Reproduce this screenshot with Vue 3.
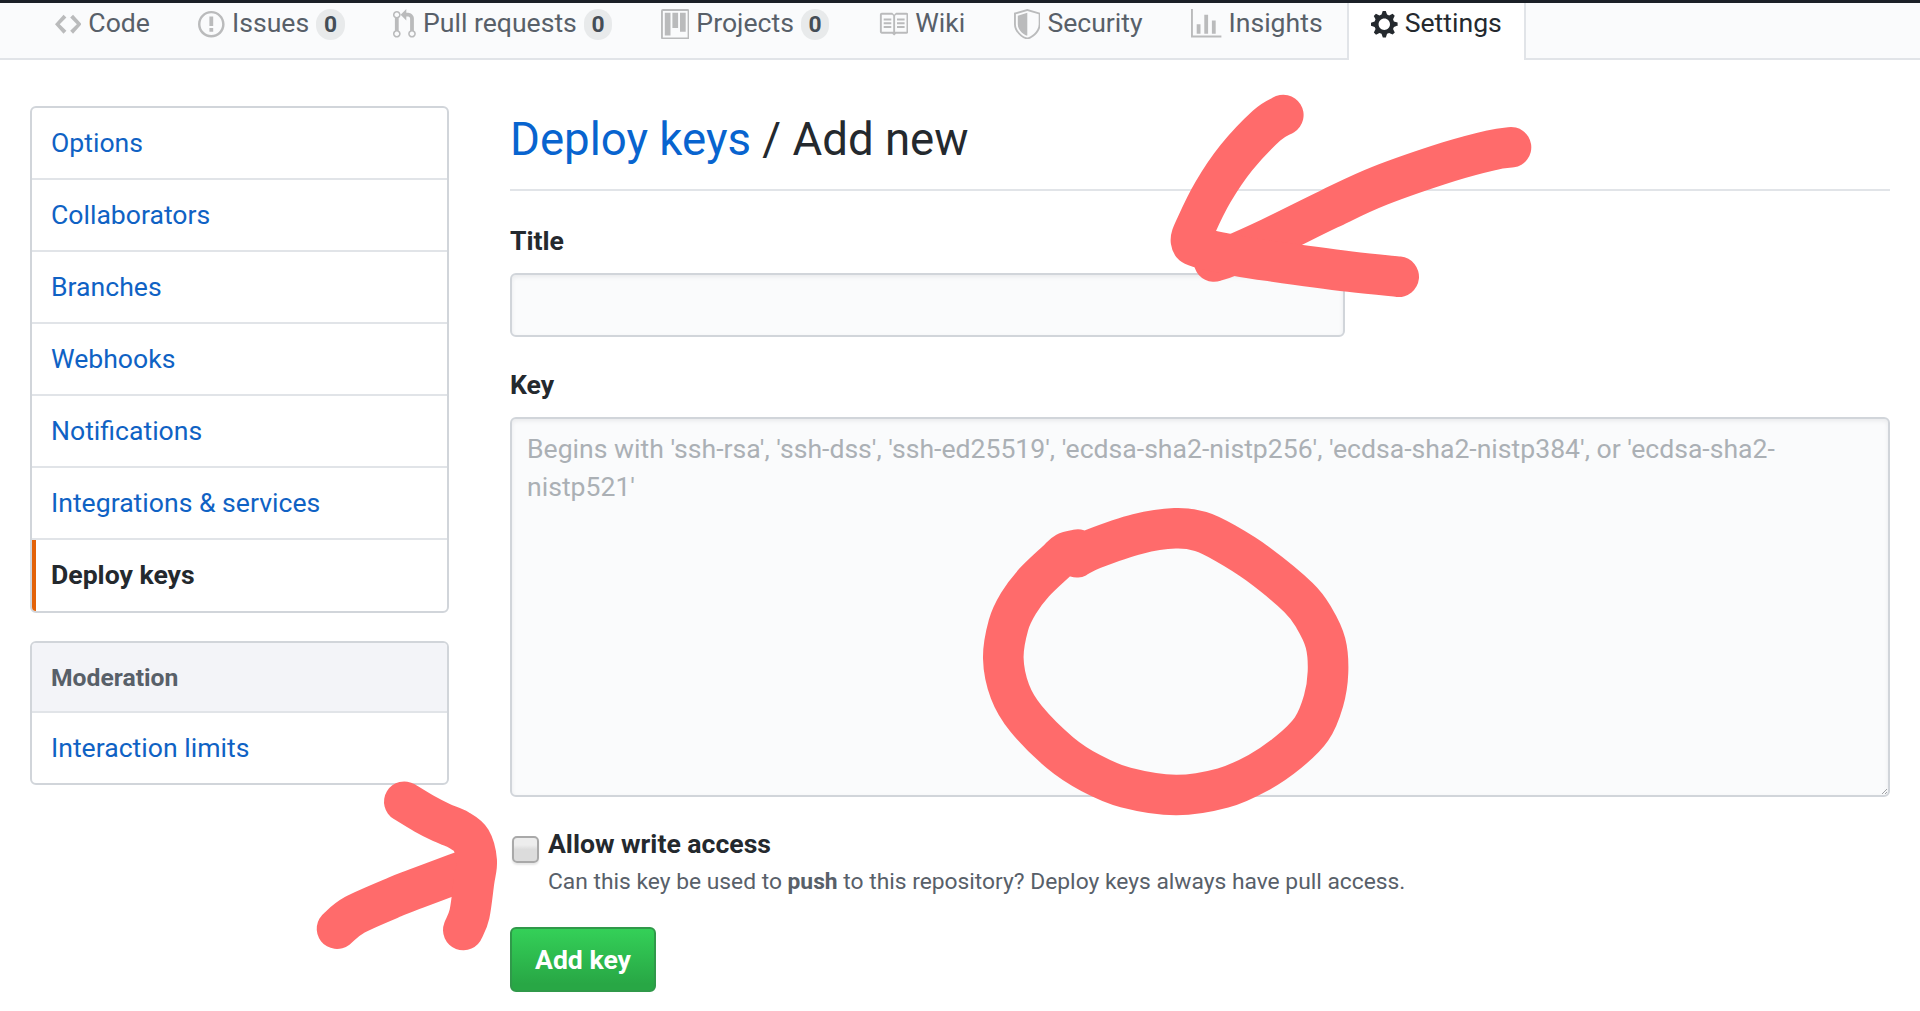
<script setup>
const tabs = [
  { label: 'Code', w: 14, d: 'M9.5 3L8 4.5 11.5 8 8 11.5 9.5 13 14 8 9.5 3zm-5 0L0 8l4.5 5L6 11.5 2.5 8 6 4.5 4.5 3z' },
  { label: 'Issues', count: 0, w: 14, d: 'M7 2.3c3.14 0 5.7 2.56 5.7 5.7s-2.56 5.7-5.7 5.7A5.71 5.71 0 0 1 1.3 8c0-3.14 2.56-5.7 5.7-5.7zM7 1C3.14 1 0 4.14 0 8s3.14 7 7 7 7-3.14 7-7-3.14-7-7-7zm1 3H6v5h2V4zm0 6H6v2h2v-2z' },
  { label: 'Pull requests', count: 0, w: 12, d: 'M11 11.28V5c-.03-.78-.34-1.47-.94-2.06C9.46 2.35 8.78 2.03 8 2H7V0L4 3l3 3V4h1c.27.02.48.11.69.31.21.2.3.42.31.69v6.28A1.993 1.993 0 0 0 10 15a1.993 1.993 0 0 0 1-3.72zm-1 2.92c-.66 0-1.2-.55-1.2-1.2 0-.65.55-1.2 1.2-1.2.65 0 1.2.55 1.2 1.2 0 .65-.55 1.2-1.2 1.2zM4 3c0-1.11-.89-2-2-2a1.993 1.993 0 0 0-1 3.72v6.56A1.993 1.993 0 0 0 2 15a1.993 1.993 0 0 0 1-3.72V4.72c.59-.34 1-.98 1-1.72zm-.8 10c0 .66-.55 1.2-1.2 1.2-.65 0-1.2-.55-1.2-1.2 0-.65.55-1.2 1.2-1.2.65 0 1.2.55 1.2 1.2zM2 4.2C1.34 4.2.8 3.65.8 3c0-.65.55-1.2 1.2-1.2.65 0 1.2.55 1.2 1.2 0 .65-.55 1.2-1.2 1.2z' },
  { label: 'Projects', count: 0, w: 15, d: 'M10 12h3V2h-3v10zm-4-2h3V2H6v8zm-4 4h3V2H2v12zm-1 1h13V1H1v14zM14 0H1a1 1 0 0 0-1 1v14a1 1 0 0 0 1 1h13a1 1 0 0 0 1-1V1a1 1 0 0 0-1-1z' },
  { label: 'Wiki', w: 16, d: 'M3 5h4v1H3V5zm0 3h4V7H3v1zm0 2h4V9H3v1zm11-5h-4v1h4V5zm0 2h-4v1h4V7zm0 2h-4v1h4V9zm2-6v9c0 .55-.45 1-1 1H9.5l-1 1-1-1H2c-.55 0-1-.45-1-1V3c0-.55.45-1 1-1h5.5l1 1 1-1H15c.55 0 1 .45 1 1zm-8 .5L7.5 3H2v9h6V3.5zm7-.5H9.5l-.5.5V12h6V3z' },
  { label: 'Security', w: 14, d: 'M0 2l7-2 7 2v6.02C14 12.69 8.69 16 7 16c-1.69 0-7-3.31-7-7.98V2zm1 .75L7 1l6 1.75v5.268C13 12.104 8.449 15 7 15c-1.449 0-6-2.896-6-6.982V2.75zm1 .75L7 2v12c-1.207 0-5-2.482-5-5.985V3.5z' },
  { label: 'Insights', w: 16, d: 'M16 14v1H0V0h1v14h15zM5 13H3V8h2v5zm4 0H7V3h2v10zm4 0h-2V6h2v7z' },
  { label: 'Settings', w: 14, active: true, d: 'M14 8.77v-1.6l-1.94-.64-.45-1.09.88-1.84-1.13-1.13-1.81.91-1.09-.45-.69-1.92h-1.6l-.63 1.94-1.11.45-1.84-.88-1.13 1.13.91 1.81-.45 1.09L0 7.23v1.59l1.94.64.45 1.09-.88 1.84 1.13 1.13 1.81-.91 1.09.45.69 1.92h1.59l.63-1.94 1.11-.45 1.84.88 1.13-1.13-.92-1.81.47-1.09L14 8.75v.02zM7 11c-1.66 0-3-1.34-3-3s1.34-3 3-3 3 1.34 3 3-1.34 3-3 3z' },
]

const menu = ['Options', 'Collaborators', 'Branches', 'Webhooks', 'Notifications', 'Integrations & services', 'Deploy keys']

// Smooth freehand line through the given points (Catmull-Rom to Bezier)
function smooth(p) {
  let d = `M${p[0][0]} ${p[0][1]}`
  for (let i = 0; i < p.length - 1; i++) {
    const a = p[i - 1] || p[i], b = p[i], c = p[i + 1], e = p[i + 2] || c
    d += `C${b[0] + (c[0] - a[0]) / 6} ${b[1] + (c[1] - a[1]) / 6} ${c[0] - (e[0] - b[0]) / 6} ${c[1] - (e[1] - b[1]) / 6} ${c[0]} ${c[1]}`
  }
  return d
}

const strokes = [
  [[1511, 147.3], [1491.7, 150.2], [1449, 161.7], [1380, 185.7], [1329, 209], [1270, 238], [1230, 256], [1214, 261.5]],
  [[1283.3, 115], [1266.7, 125.5], [1236.7, 157.3], [1213, 192], [1196, 226], [1191, 241], [1199, 247.5], [1236.7, 255.7], [1271.7, 261.2], [1350, 271.7], [1398.7, 276.7]],
  [[1076.7, 557.3], [1093, 549], [1137.7, 534], [1175, 528.3], [1200.7, 531.5], [1225, 543], [1258, 564], [1298.3, 597.3], [1314.3, 618.3], [1325.5, 643], [1328, 672], [1323.5, 701], [1311.5, 729], [1288.3, 752.3], [1258.3, 772.7], [1223, 788], [1176, 795], [1125.7, 787.5], [1090.7, 773], [1060, 752.7], [1026, 718.7], [1010, 691.7], [1003.3, 658.3], [1008.5, 625], [1018.5, 603.3], [1034, 582.7], [1056.7, 561], [1066, 552.5], [1078, 549.5]],
  [[337, 928.7], [355, 914.7], [396.7, 896.2], [415.7, 888.8], [455, 874], [472, 868]],
  [[404.3, 801.7], [424.3, 813.8], [441.7, 822.7], [458.3, 829.7], [471, 840], [476.7, 861], [474, 881.7], [469.5, 914], [463.3, 930]],
].map(smooth)
</script>

<template>
  <div class="page">
    <nav class="tabs">
      <a v-for="t in tabs" :key="t.label" class="tab" :class="{ active: t.active }">
        <svg class="icon" :viewBox="`0 0 ${t.w} 16`" :style="{ width: t.w * 1.9 + 'px' }"><path fill-rule="evenodd" :d="t.d" /></svg>
        <span class="tab-label">{{ t.label }}</span>
        <span v-if="t.count !== undefined" class="counter">{{ t.count }}</span>
      </a>
    </nav>

    <div class="columns">
      <aside class="sidebar">
        <div class="menu">
          <a v-for="m in menu" :key="m" class="item" :class="{ selected: m === 'Deploy keys' }">{{ m }}</a>
        </div>
        <div class="menu moderation">
          <div class="menu-heading">Moderation</div>
          <a class="item">Interaction limits</a>
        </div>
      </aside>

      <main class="content">
        <h2><a>Deploy keys</a> / Add new</h2>
        <label class="field-label">Title</label>
        <input class="text-input" type="text">
        <label class="field-label key-label">Key</label>
        <div class="key-box">
          <textarea class="key-input" placeholder="Begins with 'ssh-rsa', 'ssh-dss', 'ssh-ed25519', 'ecdsa-sha2-nistp256', 'ecdsa-sha2-nistp384', or 'ecdsa-sha2-nistp521'"></textarea>
          <svg class="grip" viewBox="0 0 5 5"><path d="M0 5L5 0M3 5L5 3" /></svg>
        </div>
        <div class="access">
          <span class="checkbox"></span>
          <div>
            <div class="access-title">Allow write access</div>
            <p class="hint">Can this key be used to <strong>push</strong> to this repository? Deploy keys always have pull access.</p>
          </div>
        </div>
        <button class="submit" type="button">Add key</button>
      </main>
    </div>

    <svg class="marks" viewBox="0 0 1920 1011"><path v-for="s in strokes" :key="s" :d="s" /></svg>
  </div>
</template>

<style>
body { background: #fff; overflow: hidden; }
</style>

<style scoped>
.page, .page * { box-sizing: border-box; }
.page {
  position: relative;
  width: 1920px;
  height: 1011px;
  overflow: hidden;
  color: #24292e;
  font: 26.6px/40px Roboto, sans-serif;
}
.tabs {
  display: flex;
  height: 60px;
  padding-left: 30.5px;
  background: #fafbfc;
  border-top: 3px solid #1b2027;
  border-bottom: 2px solid #e1e4e8;
}
.tab {
  display: flex;
  height: 57px;
  padding: 0 22.25px;
  border: solid transparent;
  border-width: 0 2px;
  color: #586069;
  white-space: nowrap;
}
.icon { height: 30.4px; margin: 5.7px 7px 0 0; flex: none; fill: #babbbc; }
.tab-label { line-height: 40px; }
.counter {
  width: 28.5px;
  height: 31px;
  margin: 6px 0 0 7px;
  border-radius: 16px;
  background: #e8eaeb;
  color: #444d56;
  font-size: 22.8px;
  font-weight: 700;
  line-height: 31px;
  text-align: center;
}
.tab.active { background: #fff; border-color: #e1e4e8; color: #24292e; }
.active .icon { fill: #24292e; }

.columns { display: flex; padding: 45px 30px 0 30px; }
.sidebar { width: 419px; margin: 1px 61px 0 0; }
.menu {
  border: 2px solid #d1d5da;
  border-radius: 6px;
  overflow: hidden;
}
.item {
  display: block;
  height: 72px;
  padding-left: 19px;
  border-bottom: 2px solid #e1e4e8;
  color: #0f62c4;
  line-height: 70px;
}
.item:last-child { height: 71px; border-bottom: 0; }
.item.selected {
  padding-left: 15px;
  border-left: 4px solid #e36209;
  color: #24292e;
  font-weight: 700;
}
.moderation { margin-top: 28px; }
.menu-heading {
  height: 70px;
  padding-left: 19px;
  border-bottom: 2px solid #e1e4e8;
  background: #f3f4f8;
  color: #586069;
  font-size: 24.7px;
  font-weight: 700;
  line-height: 69px;
}
.moderation .item:last-child { height: 70px; }

.content { flex: 1; }
h2 {
  height: 86px;
  margin: 0;
  border-bottom: 2px solid #e1e4e8;
  font-size: 45.6px;
  font-weight: 400;
  line-height: 70px;
}
h2 a { color: #0864cf; }
.field-label { display: block; height: 40px; margin-top: 30px; font-weight: 700; }
.text-input {
  display: block;
  width: 835px;
  height: 64px;
  margin-top: 12px;
}
.text-input, .key-input {
  border: 2px solid #d1d5da;
  border-radius: 6px;
  background: #fafbfc;
  box-shadow: inset 0 2px 4px rgba(27, 31, 35, .075);
  outline: none;
}
.key-label { margin-top: 28px; }
.key-box { position: relative; height: 380px; margin-top: 12px; }
.key-input {
  display: block;
  width: 100%;
  height: 100%;
  padding: 11px 15px;
  color: #24292e;
  font: 26.6px/38px Roboto, sans-serif;
  resize: none;
}
.key-input::placeholder { color: #abb0b5; opacity: 1; }
.grip { position: absolute; right: 3px; bottom: 3px; width: 5px; height: 5px; stroke: #8a8d91; fill: none; stroke-width: .8; }
.access { display: flex; margin-top: 27px; }
.checkbox {
  width: 27px;
  height: 27px;
  margin: 12px 9px 0 2px;
  border: 2px solid #a9a9a9;
  border-radius: 5px;
  background: linear-gradient(#ededed 30%, #dcdcdc 50%);
  box-shadow: 0 2px 2px rgba(0, 0, 0, .1);
}
.access-title { font-weight: 700; }
.hint { margin: 0; color: #586069; font-size: 22.8px; line-height: 36px; }
.submit {
  display: block;
  width: 146px;
  height: 65px;
  margin-top: 27px;
  padding: 0;
  border: 2px solid #30994a;
  border-radius: 6px;
  background: linear-gradient(#34d058, #28a745 90%);
  color: #fff;
  font: 700 26.6px/38px Roboto, sans-serif;
}
.marks { position: absolute; inset: 0; width: 1920px; height: 1011px; pointer-events: none; }
.marks path { fill: none; stroke: #ff6b6b; stroke-width: 40.6; stroke-linecap: round; stroke-linejoin: round; }
</style>
